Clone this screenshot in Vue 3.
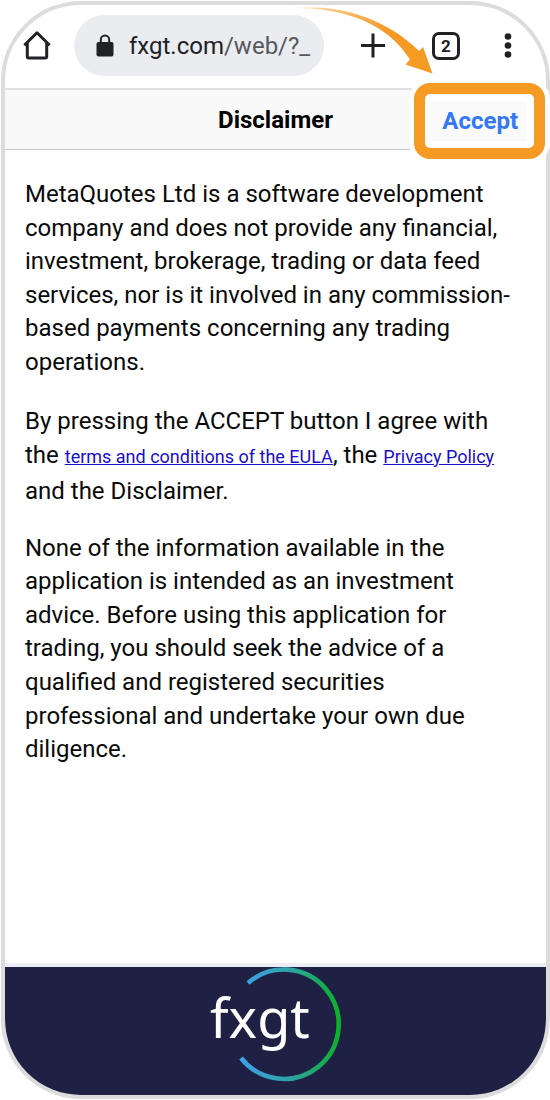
<script setup>
const tabCount = 2
const paragraphs = {
  intro:
    'MetaQuotes Ltd is a software development company and does not provide any financial, investment, brokerage, trading or data feed services, nor is it involved in any commission-based payments concerning any trading operations.',
  advice:
    'None of the information available in the application is intended as an investment advice. Before using this application for trading, you should seek the advice of a qualified and registered securities professional and undertake your own due diligence.',
}
</script>

<template>
  <div class="page">
    <div class="phone">
      <nav class="browser" aria-label="Browser toolbar">
        <button class="tool" type="button" aria-label="Home">
          <svg width="28" height="30" viewBox="0 0 28 30" fill="none" stroke="#202124" stroke-width="3" stroke-linejoin="round" stroke-linecap="butt">
            <path d="M1.3 14.2 L14 1.8 L26.7 14.2 M4.3 12 V25.6 Q4.3 27 5.7 27 H22.3 Q23.7 27 23.7 25.6 V12" />
          </svg>
        </button>
        <a class="address" href="#">
          <svg width="18" height="24" viewBox="0 0 18 24" aria-hidden="true">
            <rect x="0.5" y="8" width="17" height="14.5" rx="2" fill="#202124" />
            <path d="M4.8 9 V5.700 a4.200 4.200 0 0 1 8.400 0 V9" fill="none" stroke="#202124" stroke-width="2" />
          </svg>
          <span class="url">fxgt.com<span class="path">/web/?_</span></span>
        </a>
        <div class="actions">
          <button class="tool" type="button" aria-label="New tab">
            <svg width="26" height="26" viewBox="0 0 26 26" stroke="#202124" stroke-width="3">
              <path d="M1 12.500 H25 M13 0.500 V24.500" />
            </svg>
          </button>
          <button class="tool tabs" type="button" aria-label="Open tabs">{{ tabCount }}</button>
          <button class="tool" type="button" aria-label="More options">
            <svg width="8" height="26" viewBox="0 0 8 26" fill="#202124">
              <circle cx="4" cy="3.500" r="3.300" />
              <circle cx="4" cy="12.500" r="3.300" />
              <circle cx="4" cy="21.500" r="3.300" />
            </svg>
          </button>
        </div>
        <svg class="pointer" width="140" height="68" viewBox="0 0 140 68" aria-hidden="true">
          <defs>
            <linearGradient id="pointer-fade" gradientUnits="userSpaceOnUse" x1="0" y1="0" x2="120" y2="50">
              <stop offset="0" stop-color="#f59a23" stop-opacity="0.1" />
              <stop offset="0.3" stop-color="#f59a23" stop-opacity="0.6" />
              <stop offset="0.75" stop-color="#f59a23" />
            </linearGradient>
          </defs>
          <path d="M0 1 C40 -3 90 8 126 44 L130 40 L139.500 66.500 L112.500 57.500 L117 52.500 C94 16 52 1 0 1 Z" fill="url(#pointer-fade)" />
        </svg>
      </nav>

      <header class="bar">
        <h1>Disclaimer</h1>
        <button class="accept" type="button"><span>Accept</span></button>
      </header>

      <main class="content">
        <p>{{ paragraphs.intro }}</p>
        <p class="agreement">
          By pressing the ACCEPT button I agree with the
          <a href="#">terms and conditions of the EULA</a>, the
          <a href="#">Privacy Policy</a> and the Disclaimer.
        </p>
        <p>{{ paragraphs.advice }}</p>
      </main>

      <footer class="brand">
        <svg width="134" height="116" viewBox="0 0 134 116" role="img" aria-label="fxgt">
          <defs>
            <linearGradient id="ring" x1="0" y1="0" x2="1" y2="0">
              <stop offset="0" stop-color="#3f9fe8" />
              <stop offset="0.5" stop-color="#2fa3a8" />
              <stop offset="1" stop-color="#0db02b" />
            </linearGradient>
          </defs>
          <path d="M39 16 A54.700 54.700 0 1 1 32 91" fill="none" stroke="url(#ring)" stroke-width="4.600" />
          <text x="1" y="71" class="wordmark">fxgt</text>
        </svg>
      </footer>
    </div>
  </div>
</template>

<style>
body {
  margin: 0;
  background: #fff;
}
</style>

<style scoped>
.page {
  box-sizing: border-box;
  min-height: 100vh;
  padding: 1px 0 1px 1px;
  display: flex;
  overflow: hidden;
  font-family: Roboto, "Liberation Sans", sans-serif;
  color: #0a0a0a;
}
.phone {
  flex: 1;
  min-width: 0;
  box-sizing: border-box;
  display: flex;
  flex-direction: column;
  border: 4px solid #dcdcdc;
  border-radius: 80px;
  background: #fff;
}
button {
  font-family: inherit;
  cursor: pointer;
}
.browser {
  position: relative;
  box-sizing: border-box;
  height: 83px;
  padding: 10px 34px 12px 18px;
  display: flex;
  align-items: center;
  gap: 23px;
}
.tool {
  padding: 0;
  border: 0;
  background: none;
  color: #202124;
  display: flex;
  align-items: center;
  justify-content: center;
}
.address {
  box-sizing: border-box;
  flex: none;
  width: 250px;
  height: 61px;
  padding-left: 22px;
  border-radius: 31px;
  background: #ebecf0;
  display: flex;
  align-items: center;
  gap: 15px;
  text-decoration: none;
  color: #202124;
}
.url {
  font-size: 24px;
  line-height: 32px;
}
.path {
  color: #55585c;
}
.actions {
  flex: 1;
  display: flex;
  align-items: center;
  gap: 46px;
  padding-left: 13px;
}
.actions .tool:last-child {
  margin-left: -12px;
  flex: 1;
  justify-content: flex-end;
}
.tool.tabs {
  box-sizing: border-box;
  flex: none;
  width: 28px;
  height: 28px;
  border: 3px solid #202124;
  border-radius: 7px;
  font-size: 17px;
  font-weight: 700;
  line-height: 20px;
}
.pointer {
  position: absolute;
  right: 113px;
  top: 2px;
}
.bar {
  position: relative;
  height: 59px;
  border-top: 2px solid #e0e0e0;
  border-bottom: 1px solid #c8c8c8;
  background: #f9f9f9;
  display: grid;
  grid-template-columns: 1fr auto 1fr;
  align-items: center;
}
h1 {
  grid-column: 2;
  margin: 0;
  font-size: 24px;
  font-weight: 700;
  line-height: 32px;
  color: #000;
}
.accept {
  justify-self: end;
  margin: -10px 1px -12px 0;
  padding: 7px;
  border: 11px solid #f59a23;
  border-radius: 16px;
  background: #fff;
  box-shadow: 0 0 0 5px #fff;
  color: #3478f6;
  font-size: 24px;
  font-weight: 700;
  line-height: 40px;
}
.accept span {
  display: block;
  padding: 0 9px 0 10px;
  background: #fafafa;
}
.content {
  flex: 1;
  padding: 28px 28px 24px 20px;
  font-size: 24px;
  line-height: 1.4;
}
.content p {
  margin: 0 0 24px;
}
.content .agreement {
  line-height: 34px;
}
.content a {
  font-size: 18px;
  color: #1a0dcc;
}
.brand {
  height: 128px;
  border-top: 4px solid #ecedf6;
  border-radius: 0 0 76px 76px;
  background: #1f2144;
  display: flex;
  justify-content: center;
}
.wordmark {
  font-family: "Noto Sans", sans-serif;
  font-size: 54px;
  fill: #fff;
}
</style>
